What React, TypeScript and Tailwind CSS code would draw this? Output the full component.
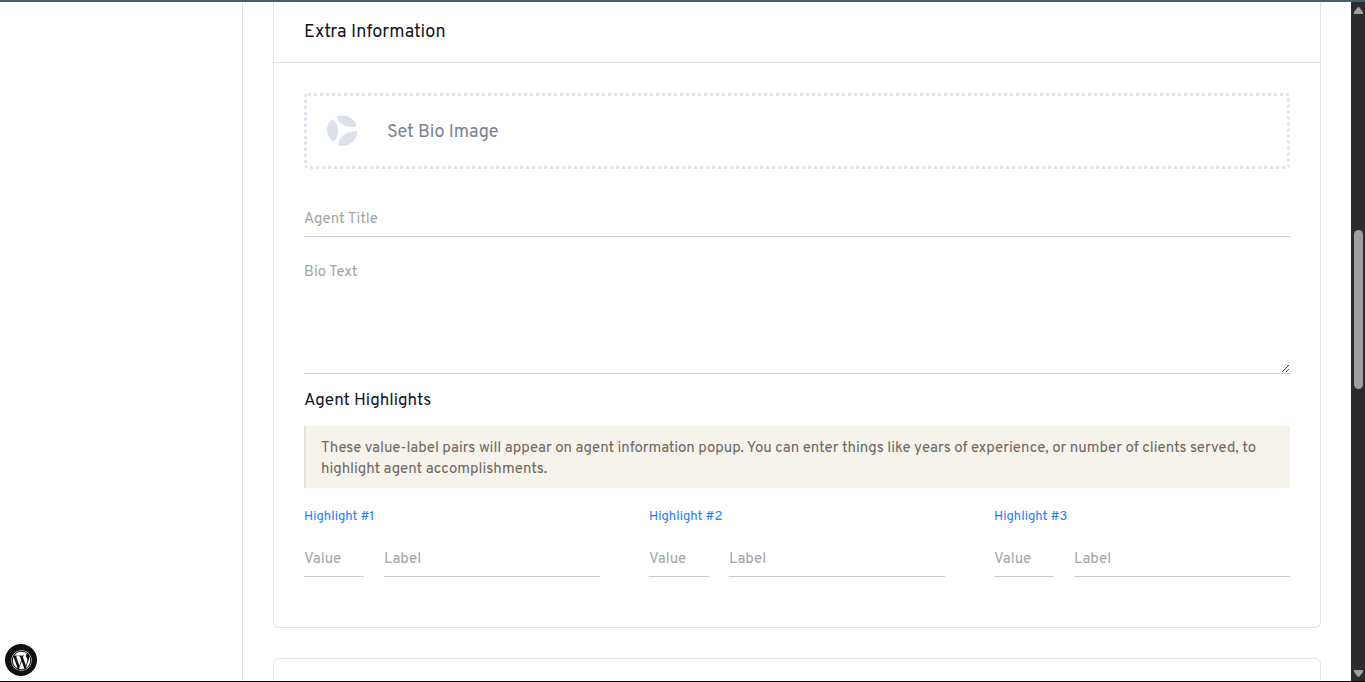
import { FaWordpress } from "react-icons/fa";

function Field({ label, className }: { label: string; className: string }) {
  return (
    <div className={`border-b border-[#cecbd8] text-[15px] leading-[20px] text-[#a3a4a6] ${className}`}>
      <span className="tracking-[0.04px]">{label}</span>
    </div>
  );
}

function Highlight({ n }: { n: number }) {
  return (
    <div className="w-[296px]">
      <div className="text-[13px] leading-[18px] tracking-[0.04px] text-[#1d7bff]">Highlight #{n}</div>
      <div className="mt-[14px] flex gap-5">
        <Field label="Value" className="h-[37px] w-[60px] pt-[10px]" />
        <Field label="Label" className="h-[37px] w-[216px] pt-[10px]" />
      </div>
    </div>
  );
}

function Scrollbar() {
  return (
    <div className="flex w-[14px] shrink-0 flex-col items-center bg-[#2c2c2c] pl-px">
      <svg className="mt-[5px] h-[7px] w-[9px] shrink-0" viewBox="0 0 9 7">
        <path d="M3.3.7Q4.5-.5 5.7.7L9 5v2H0V5Z" fill="#9f9f9f" />
      </svg>
      <div className="mt-[216px] h-[159px] w-[9px] shrink-0 rounded-full bg-[#9f9f9f]" />
      <svg className="mt-auto mb-[4px] h-[7px] w-[9px] shrink-0" viewBox="0 0 9 7">
        <path d="M3.3 6.3Q4.5 7.5 5.7 6.3L9 2V0H0v2Z" fill="#9f9f9f" />
      </svg>
    </div>
  );
}

export default function App() {
  return (
    <div className="relative flex h-[682px] w-[1365px] overflow-hidden border-t-2 border-b border-t-[#4b5e68] border-b-black bg-white font-['Overpass','Roboto',sans-serif]">
      <aside className="w-[243px] shrink-0 border-r border-[#e4e4e6]" />
      <main className="flex flex-1 flex-col pr-[30px] pl-[30px]">
        <section className="h-[626px] shrink-0 rounded-b-[6px] border border-t-0 border-[#e4e4e6]">
          <h2 className="h-[61px] border-b border-[#e4e4e6] pt-[19px] pl-[30px] text-[18px] leading-[24px] tracking-[0.12px] text-[#14161d]">
            <span>Extra Information</span>
          </h2>
          <div className="px-[30px] pt-[30px]">
            <div className="flex h-[76px] items-center rounded-[4px] border-[3px] border-dotted border-[#dfe3ec] pl-[20px]">
              <svg className="mb-[2px] h-[31px] w-[31px]" viewBox="0 0 31 31" fill="#dce0ea">
                <path d="M5.4 4.2C12.8 10 12.8 21 6.4 26.8C-2 20-2 10 5.4 4.2Z" />
                <path d="M9.2 1.6C18-2 28 3 29.8 11.4C20 13.5 12 9.5 9.2 1.6Z" />
                <path d="M30.5 16.3C30 26 21 33 11.2 30.5C12 21 20 15.5 30.5 16.3Z" />
              </svg>
              <span className="ml-[29px] pt-[4px] text-[18px] leading-[24px] text-[#7b8190]">Set Bio Image</span>
            </div>
            <Field label="Agent Title" className="mt-[30px] h-[38px] pt-[11px]" />
            <div className="relative mt-[16px]">
              <Field label="Bio Text" className="h-[121px] pt-[10px]" />
              <svg className="absolute right-px bottom-[2px] h-[7px] w-[7px]" viewBox="0 0 7 7" fill="#444" shapeRendering="crispEdges">
                <path d="M0 6h1v1H0zM1 5h1v1H1zM2 4h1v1H2zM3 3h1v1H3zM4 2h1v1H4zM5 1h1v1H5zM6 0h1v1H6zM4 6h1v1H4zM5 5h1v1H5zM6 4h1v1H6z" />
              </svg>
            </div>
            <h3 className="mt-[15px] text-[17px] leading-[24px] text-[#14161d]"><span>Agent Highlights</span></h3>
            <div className="mt-[13px] h-[62px] border-l-2 border-[#e6e2d9] bg-[#f6f3ec] pt-[12px] pl-[15px] text-[15px] leading-[21px] tracking-[-0.014px] whitespace-nowrap text-[#6d675f]">
              <span>These value-label pairs will appear on agent information popup. You can enter things like years of experience, or number of clients served, to</span>
              <br />
              <span>highlight agent accomplishments.</span>
            </div>
            <div className="mt-[20px] flex justify-between">
              <Highlight n={1} />
              <Highlight n={2} />
              <Highlight n={3} />
            </div>
          </div>
        </section>
        <section className="mt-[30px] h-[60px] shrink-0 rounded-t-[6px] border border-[#e4e4e6]" />
      </main>
      <Scrollbar />
      <div className="absolute top-[642px] left-[5px] flex h-[32px] w-[32px] items-center justify-center rounded-full bg-[#101010]">
        <FaWordpress className="h-[21px] w-[21px] text-white" />
      </div>
    </div>
  );
}
